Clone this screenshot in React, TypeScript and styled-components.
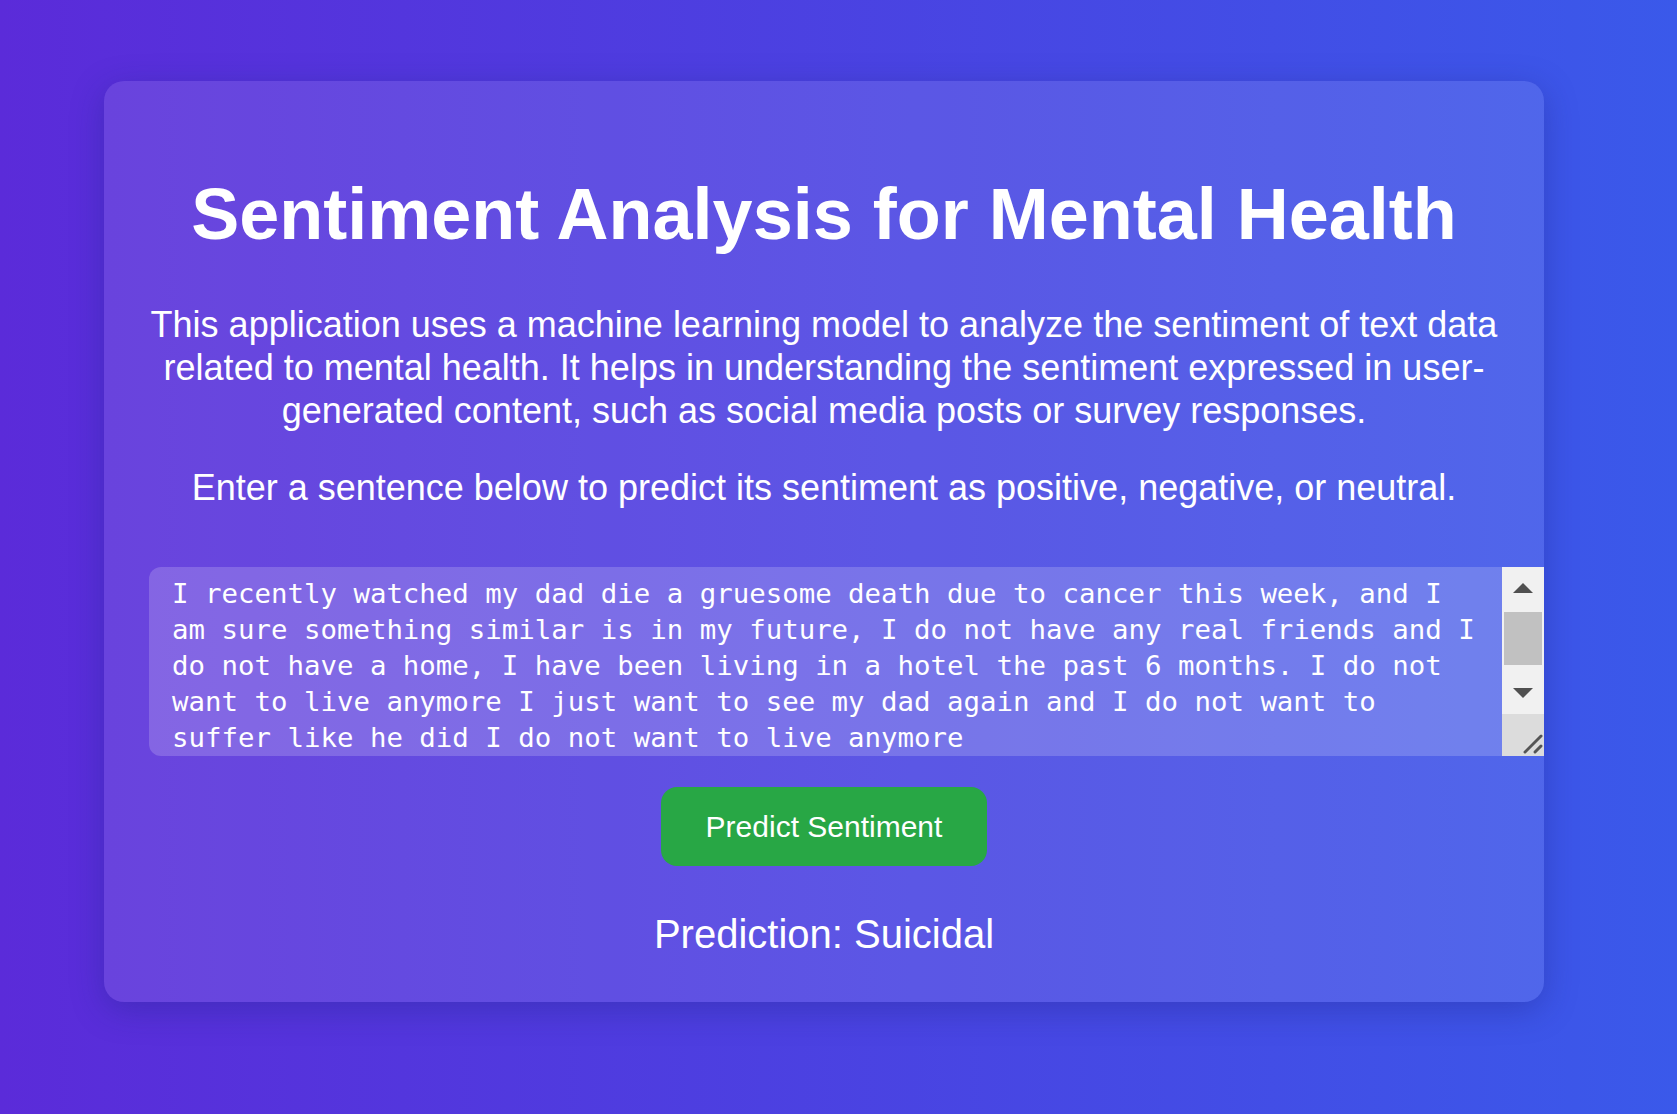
import { useState } from "react";
import styled, { createGlobalStyle } from "styled-components";

const GlobalStyle = createGlobalStyle`
  html, body {
    margin: 0;
    padding: 0;
  }
  body {
    min-height: 100vh;
    background: linear-gradient(to right, #5b2bd9, #3a59ea);
    font-family: "Liberation Sans", Arial, sans-serif;
    color: #fff;
  }
`;

const sampleText =
  "I recently watched my dad die a gruesome death due to cancer this week, and I am sure something similar is in my future, I do not have any real friends and I do not have a home, I have been living in a hotel the past 6 months. I do not want to live anymore I just want to see my dad again and I do not want to suffer like he did I do not want to live anymore";

const App = () => {
  const [text, setText] = useState(sampleText);
  const [prediction] = useState("Suicidal");

  return (
    <>
      <GlobalStyle />
      <Page>
        <Card>
          <Title>Sentiment Analysis for Mental Health</Title>
          <Intro>
            This application uses a machine learning model to analyze the sentiment of text data
            related to mental health. It helps in understanding the sentiment expressed in
            user-generated content, such as social media posts or survey responses.
          </Intro>
          <Hint>Enter a sentence below to predict its sentiment as positive, negative, or neutral.</Hint>
          <TextBox>
            <TextInput value={text} onChange={(e) => setText(e.target.value)} spellCheck={false} />
            <ScrollBar>
              <ArrowBtn>
                <Arrow $dir="up" />
              </ArrowBtn>
              <Track>
                <Thumb />
              </Track>
              <ArrowBtn>
                <Arrow $dir="down" />
              </ArrowBtn>
              <Resizer>
                <svg width="42" height="42" viewBox="0 0 42 42">
                  <line x1="22" y1="38" x2="39" y2="21" stroke="#fff" strokeWidth="2" />
                  <line x1="23" y1="38" x2="39" y2="22" stroke="#555" strokeWidth="3" strokeLinecap="round" />
                  <line x1="33" y1="38" x2="39" y2="32" stroke="#555" strokeWidth="3" strokeLinecap="round" />
                </svg>
              </Resizer>
            </ScrollBar>
          </TextBox>
          <PredictBtn>Predict Sentiment</PredictBtn>
          <Result>Prediction: {prediction}</Result>
        </Card>
      </Page>
    </>
  );
};

export default App;

const Page = styled.main`
  padding: 81px 133px 112px 104px;
`;

const Card = styled.section`
  width: 1440px;
  box-sizing: border-box;
  padding: 45px;
  border-radius: 20px;
  background: rgba(255, 255, 255, 0.1);
  box-shadow: 0 8px 32px 0 rgba(31, 38, 135, 0.37);
  display: flex;
  flex-direction: column;
  align-items: center;
  text-align: center;
`;

const Title = styled.h1`
  margin: 47px 0 0;
  font-size: 72px;
  line-height: 83px;
  font-weight: bold;
`;

const Intro = styled.p`
  margin: 47px 0 0;
  font-size: 36px;
  line-height: 43px;
`;

const Hint = styled(Intro)`
  margin-top: 34px;
`;

const TextBox = styled.div`
  position: relative;
  align-self: stretch;
  margin: 58px -45px 0 0;
  height: 189px;
`;

const TextInput = styled.textarea`
  display: block;
  width: 100%;
  height: 100%;
  box-sizing: border-box;
  padding: 9px 62px 0 23px;
  border: none;
  outline: none;
  border-radius: 12px;
  resize: none;
  overflow: hidden;
  background: rgba(255, 255, 255, 0.18);
  color: #fff;
  font-family: "DejaVu Sans Mono", Consolas, monospace;
  font-size: 27.4px;
  line-height: 36px;
`;

const ScrollBar = styled.div`
  position: absolute;
  top: 0;
  right: 0;
  bottom: 0;
  width: 42px;
  background: #f1f1f1;
  display: flex;
  flex-direction: column;
`;

const ArrowBtn = styled.div`
  height: 42px;
  display: flex;
  align-items: center;
  justify-content: center;
`;

const Arrow = styled.span<{ $dir: "up" | "down" }>`
  width: 0;
  height: 0;
  border-left: 10px solid transparent;
  border-right: 10px solid transparent;
  ${(p) => (p.$dir === "up" ? "border-bottom: 10px solid #505050;" : "border-top: 10px solid #505050;")}
`;

const Track = styled.div`
  flex: 1;
  padding: 3px 2px 0;
`;

const Thumb = styled.div`
  height: 53px;
  background: #c1c1c1;
`;

const Resizer = styled.div`
  height: 42px;
  background: #dcdcdc;
  line-height: 0;
`;

const PredictBtn = styled.button`
  margin-top: 31px;
  padding: 22px 45px;
  border: none;
  border-radius: 16px;
  background: #28a745;
  color: #fff;
  font-family: "Liberation Sans", Arial, sans-serif;
  font-size: 30px;
  line-height: 35px;
  cursor: pointer;
`;

const Result = styled.h2`
  margin: 45px 0 0;
  font-size: 40px;
  line-height: 46px;
  font-weight: normal;
`;
